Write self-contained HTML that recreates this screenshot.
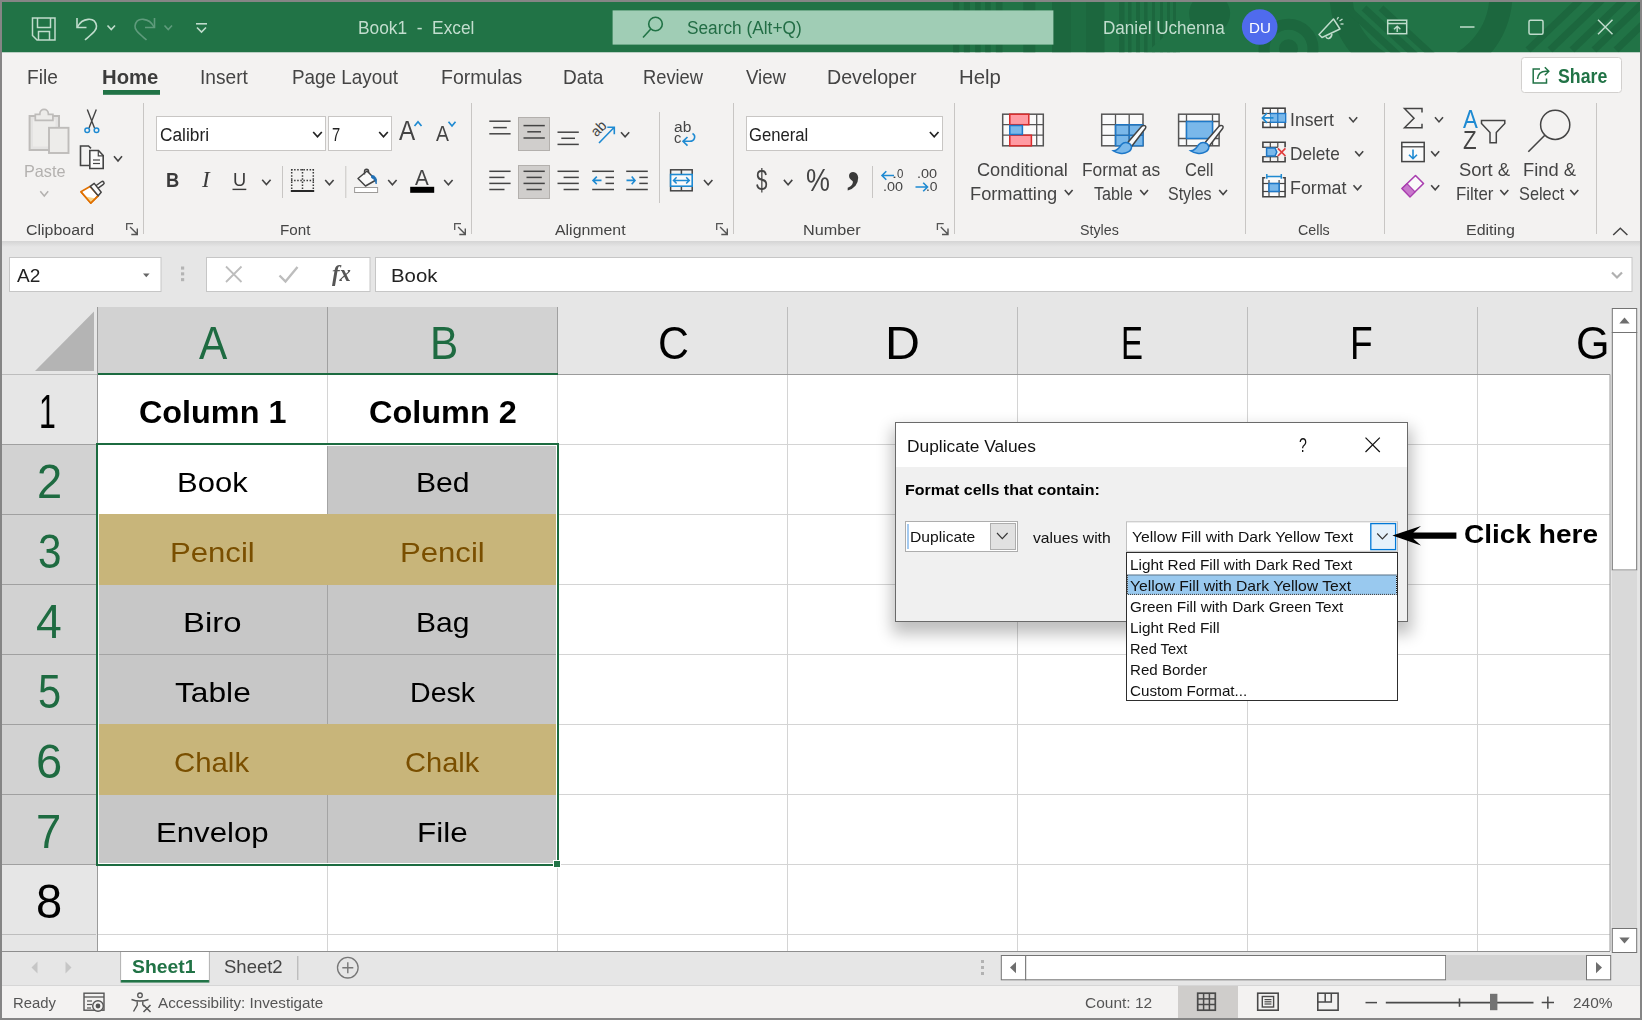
<!DOCTYPE html>
<html lang="en"><head><meta charset="utf-8"><title>Book1 - Excel</title>
<style>
html,body{margin:0;padding:0;}
body{width:1642px;height:1020px;overflow:hidden;position:relative;background:#e6e6e6;font-family:"Liberation Sans", sans-serif;}
#g{position:absolute;left:0;top:0;}
.t{position:absolute;white-space:pre;transform-origin:0 0;line-height:1;}
</style></head><body>
<svg id="g" width="1642" height="1020" viewBox="0 0 1642 1020">
<rect x="0" y="0" width="1642" height="1020" fill="#e6e6e6" />
<rect x="0" y="0" width="1642" height="52.5" fill="#217346" />
<clipPath id="tb"><rect x="0" y="2" width="1642" height="50.5"/></clipPath>
<g clip-path="url(#tb)" fill="#1c673e" stroke="none"><rect x="1052" y="0" width="19" height="53"/><rect x="1071" y="0" width="15" height="53" opacity="0.5"/><rect x="1086" y="0" width="18.5" height="53"/><rect x="1119" y="0" width="5.5" height="53"/><rect x="1128" y="0" width="3.5" height="53"/><rect x="1136" y="0" width="4" height="53"/><rect x="1144" y="0" width="3.5" height="53"/><rect x="1152" y="0" width="3" height="53"/><rect x="1160" y="0" width="3" height="53"/><rect x="1167" y="0" width="3" height="53"/><rect x="1173" y="0" width="3" height="53"/><rect x="953.2" y="0" width="6" height="53"/><rect x="963.9" y="0" width="6" height="53"/><rect x="975.2" y="0" width="5.4" height="53"/><rect x="985.2" y="0" width="5.5" height="53"/><rect x="995.9" y="0" width="6.6" height="53"/><rect x="1023.3" y="0" width="12" height="53"/><polygon points="1146,53 1180,53 1180,22" fill="#217346"/><circle cx="1209.6" cy="13.6" r="20.5"/></g>
<g clip-path="url(#tb)" fill="none" stroke="#1c673e"><circle cx="1288.5" cy="48.7" r="24.5" stroke-width="11"/><circle cx="1288.5" cy="48.7" r="9.5" fill="#1c673e" stroke="none"/><circle cx="1421" cy="-6" r="80" stroke-width="23"/><line x1="1347" y1="8" x2="1399" y2="56" stroke-width="7"/><line x1="1364" y1="8" x2="1416" y2="56" stroke-width="7"/><line x1="1381" y1="8" x2="1433" y2="56" stroke-width="7"/><line x1="1580" y1="0" x2="1528" y2="50" stroke-width="7"/><line x1="1602" y1="0" x2="1550" y2="50" stroke-width="7"/><line x1="1624" y1="0" x2="1572" y2="50" stroke-width="7"/><line x1="1646" y1="0" x2="1594" y2="50" stroke-width="7"/><line x1="1668" y1="0" x2="1616" y2="50" stroke-width="7"/></g>
<rect x="0" y="52.5" width="1642" height="188.5" fill="#f3f2f1" />
<defs><linearGradient id="rs" x1="0" y1="0" x2="0" y2="1"><stop offset="0" stop-color="#d4d4d4"/><stop offset="1" stop-color="#e6e6e6"/></linearGradient></defs>
<rect x="0" y="241" width="1642" height="6" fill="url(#rs)" />
<path d="M32.5 18 H55 V40 H37 L32.5 35.5 Z" stroke="#c0dccc" stroke-width="1.5" fill="none" />
<path d="M37.5 18 V27.5 H50.5 V18" stroke="#c0dccc" stroke-width="1.5" fill="none" />
<path d="M38.5 40 V31.5 H49.5 V40" stroke="#c0dccc" stroke-width="1.5" fill="none" />
<path d="M77 18 V27.5 H86.5" stroke="#c0dccc" stroke-width="1.6" fill="none" />
<path d="M77.5 27 C82 18 95 16 96.5 26 C97 30 93 33 85 40" stroke="#c0dccc" stroke-width="1.6" fill="none" />
<path d="M107.5 25.5 L111.25 29.5 L115 25.5" stroke="#c0dccc" stroke-width="1.6" fill="none" stroke-linejoin="miter"/>
<path d="M154.5 18 V27.5 H145" stroke="#5f9b7c" stroke-width="1.6" fill="none" />
<path d="M154 27 C149.5 18 136.5 16 135 26 C134.5 30 138.5 33 146.5 40" stroke="#5f9b7c" stroke-width="1.6" fill="none" />
<path d="M164.5 25.5 L168.25 29.5 L172 25.5" stroke="#5f9b7c" stroke-width="1.6" fill="none" stroke-linejoin="miter"/>
<line x1="196" y1="23.8" x2="207" y2="23.8" stroke="#c0dccc" stroke-width="1.6" />
<path d="M197 27.5 L201.5 32 L206 27.5" stroke="#c0dccc" stroke-width="1.6" fill="none" stroke-linejoin="miter"/>
<rect x="612.6" y="10.4" width="440.8" height="34.2" fill="#a0cdb5" />
<circle cx="655.5" cy="24" r="6.8" fill="none" stroke="#217346" stroke-width="1.6"/>
<line x1="650.8" y1="29" x2="643" y2="37.5" stroke="#217346" stroke-width="1.6" />
<circle cx="1259.7" cy="27" r="17.8" fill="#4f6bed"/>
<path d="M1319 34.5 L1333.5 19 L1340 29 L1322 37.5 Z" stroke="#c0dccc" stroke-width="1.5" fill="none" stroke-linejoin="round"/>
<path d="M1326 36.5 C1326.5 39.5 1331 39.5 1332 34" stroke="#c0dccc" stroke-width="1.5" fill="none" />
<line x1="1337" y1="19.5" x2="1338.5" y2="17" stroke="#c0dccc" stroke-width="1.4" />
<line x1="1339.5" y1="21" x2="1342.5" y2="19" stroke="#c0dccc" stroke-width="1.4" />
<line x1="1340.5" y1="24" x2="1343.5" y2="24" stroke="#c0dccc" stroke-width="1.4" />
<rect x="1387.7" y="20.2" width="19" height="13.5" fill="none" stroke="#c0dccc" stroke-width="1.5" />
<line x1="1387.7" y1="23.5" x2="1406.7" y2="23.5" stroke="#c0dccc" stroke-width="1.5" />
<path d="M1397.2 32 V26.5 M1394 29.3 L1397.2 26.2 L1400.4 29.3" stroke="#c0dccc" stroke-width="1.4" fill="none" />
<line x1="1460" y1="27" x2="1474.5" y2="27" stroke="#c0dccc" stroke-width="1.5" />
<rect x="1529" y="20.2" width="14" height="14" fill="none" stroke="#c0dccc" stroke-width="1.5" rx="1.5" />
<path d="M1598 19.8 L1612.5 34.3 M1612.5 19.8 L1598 34.3" stroke="#c0dccc" stroke-width="1.5" fill="none" />
<rect x="103" y="90" width="57" height="4.8" fill="#217346" />
<rect x="1521.5" y="57.5" width="100" height="35" fill="#ffffff" stroke="#d2d0ce" stroke-width="1" rx="3" />
<path d="M1540 69 H1533.2 V83 H1546.5 V78.5" stroke="#217346" stroke-width="1.5" fill="none" />
<path d="M1537.5 79 C1538 73.5 1541.5 71.3 1546 71.3 H1548.5 M1544.8 67.3 L1548.8 71.3 L1544.8 75.3" stroke="#217346" stroke-width="1.5" fill="none" />
<line x1="143.5" y1="103" x2="143.5" y2="234" stroke="#c8c6c4" stroke-width="1" />
<line x1="471.5" y1="103" x2="471.5" y2="234" stroke="#c8c6c4" stroke-width="1" />
<line x1="733.5" y1="103" x2="733.5" y2="234" stroke="#c8c6c4" stroke-width="1" />
<line x1="954.5" y1="103" x2="954.5" y2="234" stroke="#c8c6c4" stroke-width="1" />
<line x1="1245.5" y1="103" x2="1245.5" y2="234" stroke="#c8c6c4" stroke-width="1" />
<line x1="1384.5" y1="103" x2="1384.5" y2="234" stroke="#c8c6c4" stroke-width="1" />
<line x1="1596.5" y1="103" x2="1596.5" y2="234" stroke="#c8c6c4" stroke-width="1" />
<rect x="29.6" y="116" width="29.4" height="34" fill="#e4e3e2" stroke="#bebcba" stroke-width="2" />
<rect x="33" y="119.5" width="22.5" height="27" fill="#edecea" />
<path d="M35.3 120.3 V114.3 H39.8 C39.8 107.8 48.4 107.8 48.4 114.3 H52.9 V120.3 Z" stroke="#bebcba" stroke-width="1.7" fill="#edecea" />
<rect x="49" y="127.8" width="19.5" height="25.2" fill="#edecea" stroke="#bebcba" stroke-width="1.9" />
<path d="M40.3 191.2 L44.25 196 L48.2 191.2" stroke="#b3b1af" stroke-width="1.5" fill="none" stroke-linejoin="miter"/>
<path d="M87.3 109.5 L94.5 128 M96.3 109.5 L89 128" stroke="#444444" stroke-width="1.4" fill="none" />
<circle cx="87.2" cy="130.2" r="2.3" fill="none" stroke="#1e8ad2" stroke-width="1.5"/><circle cx="96.5" cy="130.2" r="2.3" fill="none" stroke="#1e8ad2" stroke-width="1.5"/>
<path d="M89 165.5 H80.5 V146 H88.5 L91 148.3" stroke="#444444" stroke-width="1.6" fill="none" />
<path d="M89.8 150.5 H98.5 L103.2 155.5 V168.5 H89.8 Z" stroke="#444444" stroke-width="1.6" fill="#fafafa" />
<path d="M98.3 150.8 V155.8 H103" stroke="#444444" stroke-width="1.2" fill="none" />
<line x1="93" y1="160" x2="100" y2="160" stroke="#444444" stroke-width="1.2" />
<line x1="93" y1="163.5" x2="100" y2="163.5" stroke="#444444" stroke-width="1.2" />
<path d="M114 156.2 L118.0 161 L122 156.2" stroke="#444444" stroke-width="1.6" fill="none" stroke-linejoin="miter"/>
<path d="M80.9 191.7 L90 186.5 L98.3 195.6 L90.7 203.1 Z" stroke="#e07000" stroke-width="1.6" fill="#ffffff" stroke-linejoin="round"/>
<path d="M85.3 196.6 L96.2 198.4 L90.7 202.8 Z" stroke="none" stroke-width="0" fill="#f8d58a" />
<path d="M80.9 191.7 L90.7 203.1 L98.3 195.6" stroke="#e07000" stroke-width="1.6" fill="none" stroke-linejoin="round"/>
<line x1="97.5" y1="186.6" x2="102.4" y2="183.1" stroke="#444444" stroke-width="4.8" stroke-linecap="round"/>
<line x1="97.5" y1="186.6" x2="102.4" y2="183.1" stroke="#fafafa" stroke-width="1.8" stroke-linecap="round"/>
<path d="M90.2 186.3 L94.2 183.4 L101.2 192.2 L98.2 195.7 Z" stroke="#444444" stroke-width="1.5" fill="#fafafa" stroke-linejoin="round"/>
<path d="M126.7 230.0 V223.7 H133.0" stroke="#555" stroke-width="1.3" fill="none" />
<path d="M130.1 227.1 L137.1 234.1 M137.3 228.5 V234.5 H131.3" stroke="#555" stroke-width="1.4" fill="none" />
<rect x="156.5" y="116.5" width="169" height="34" fill="#ffffff" stroke="#c8c6c4" stroke-width="1" />
<rect x="328.5" y="116.5" width="63" height="34" fill="#ffffff" stroke="#c8c6c4" stroke-width="1" />
<path d="M313.2 132 L317.5 136.8 L321.8 132" stroke="#222" stroke-width="1.7" fill="none" stroke-linejoin="miter"/>
<path d="M379.2 132 L383.5 136.8 L387.8 132" stroke="#222" stroke-width="1.7" fill="none" stroke-linejoin="miter"/>
<path d="M414.5 126 L418.0 121.8 L421.5 126" stroke="#1e8ad2" stroke-width="1.7" fill="none" stroke-linejoin="miter"/>
<path d="M448.5 121.8 L452.0 126 L455.5 121.8" stroke="#1e8ad2" stroke-width="1.7" fill="none" stroke-linejoin="miter"/>
<line x1="232.5" y1="189.4" x2="246.3" y2="189.4" stroke="#3a3a3a" stroke-width="1.4" />
<path d="M262.2 179.8 L266.4 184.6 L270.6 179.8" stroke="#444444" stroke-width="1.6" fill="none" stroke-linejoin="miter"/>
<line x1="282.5" y1="166" x2="282.5" y2="198" stroke="#c8c6c4" stroke-width="1" />
<line x1="291" y1="169.8" x2="314" y2="169.8" stroke="#3a3a3a" stroke-width="1.5" stroke-dasharray="1.5 1.6"/>
<line x1="291" y1="180.5" x2="314" y2="180.5" stroke="#3a3a3a" stroke-width="1.5" stroke-dasharray="1.5 1.6"/>
<line x1="291.7" y1="169" x2="291.7" y2="190" stroke="#3a3a3a" stroke-width="1.5" stroke-dasharray="1.5 1.6"/>
<line x1="302.5" y1="169" x2="302.5" y2="190" stroke="#3a3a3a" stroke-width="1.5" stroke-dasharray="1.5 1.6"/>
<line x1="313.3" y1="169" x2="313.3" y2="190" stroke="#3a3a3a" stroke-width="1.5" stroke-dasharray="1.5 1.6"/>
<line x1="290.8" y1="191" x2="314.2" y2="191" stroke="#111" stroke-width="1.8" />
<path d="M325.2 180 L329.4 184.8 L333.6 180" stroke="#444444" stroke-width="1.6" fill="none" stroke-linejoin="miter"/>
<line x1="345.8" y1="166" x2="345.8" y2="198" stroke="#c8c6c4" stroke-width="1" />
<path d="M367 171 L376 180 L365.5 186 L358 178.5 Z" stroke="#444444" stroke-width="1.5" fill="#fafafa" stroke-linejoin="round"/>
<path d="M364.5 174.5 V171.5 C364.5 168.5 368.6 168.5 368.6 171.5 V173" stroke="#444444" stroke-width="1.4" fill="none" />
<path d="M371.5 175.5 C375.5 175 377.2 179 376.2 184 C375.5 181 374 178.5 371.5 177.8 Z" stroke="#1e6fb5" stroke-width="0.8" fill="#1e6fb5" />
<rect x="354.6" y="187.5" width="23" height="5" fill="#ffffff" stroke="#9d9b99" stroke-width="1" />
<path d="M388.2 180 L392.4 184.8 L396.6 180" stroke="#444444" stroke-width="1.6" fill="none" stroke-linejoin="miter"/>
<rect x="410.2" y="186.8" width="24" height="6" fill="#000000" />
<path d="M444.2 180 L448.4 184.8 L452.6 180" stroke="#444444" stroke-width="1.6" fill="none" stroke-linejoin="miter"/>
<path d="M454.7 230.0 V223.7 H461.0" stroke="#555" stroke-width="1.3" fill="none" />
<path d="M458.1 227.1 L465.1 234.1 M465.3 228.5 V234.5 H459.3" stroke="#555" stroke-width="1.4" fill="none" />
<rect x="518.5" y="117.5" width="31" height="33" fill="#d0cecc" stroke="#b3b0ad" stroke-width="1" />
<rect x="518.5" y="165.5" width="31" height="33" fill="#d0cecc" stroke="#b3b0ad" stroke-width="1" />
<line x1="489.3" y1="121.2" x2="510.6" y2="121.2" stroke="#444444" stroke-width="1.5" />
<line x1="493.2" y1="127.6" x2="506.8" y2="127.6" stroke="#444444" stroke-width="1.5" />
<line x1="489.3" y1="133.8" x2="510.6" y2="133.8" stroke="#444444" stroke-width="1.5" />
<line x1="523.5" y1="125.6" x2="544.8" y2="125.6" stroke="#444444" stroke-width="1.5" />
<line x1="527.3" y1="131.8" x2="541" y2="131.8" stroke="#444444" stroke-width="1.5" />
<line x1="523.5" y1="138" x2="544.8" y2="138" stroke="#444444" stroke-width="1.5" />
<line x1="557.5" y1="132.2" x2="578.8" y2="132.2" stroke="#444444" stroke-width="1.5" />
<line x1="561.3" y1="138.3" x2="575" y2="138.3" stroke="#444444" stroke-width="1.5" />
<line x1="557.5" y1="144.4" x2="578.8" y2="144.4" stroke="#444444" stroke-width="1.5" />
<text x="0" y="0" transform="translate(596.5 137.5) rotate(-45)" font-family="Liberation Sans, sans-serif" font-size="14.5" fill="#444444" textLength="15.5" lengthAdjust="spacingAndGlyphs">ab</text>
<path d="M599 143 L614 127.5 M607.3 127.3 H614.3 V134.3" stroke="#1e8ad2" stroke-width="1.6" fill="none" />
<path d="M621 132.2 L625.1 136.8 L629.2 132.2" stroke="#444444" stroke-width="1.6" fill="none" stroke-linejoin="miter"/>
<line x1="659.5" y1="112" x2="659.5" y2="203" stroke="#c8c6c4" stroke-width="1" />
<path d="M692.5 133.5 C696.5 136 694.5 141.5 689.5 141.3 H683.5 M687.5 137 L683 141.3 L687.5 145.6" stroke="#1e8ad2" stroke-width="1.6" fill="none" />
<line x1="489.3" y1="171.3" x2="510.6" y2="171.3" stroke="#444444" stroke-width="1.5" />
<line x1="523.5" y1="171.3" x2="544.8" y2="171.3" stroke="#444444" stroke-width="1.5" />
<line x1="557.5" y1="171.3" x2="578.8" y2="171.3" stroke="#444444" stroke-width="1.5" />
<line x1="489.3" y1="177.4" x2="504.5" y2="177.4" stroke="#444444" stroke-width="1.5" />
<line x1="526.5" y1="177.4" x2="541.8" y2="177.4" stroke="#444444" stroke-width="1.5" />
<line x1="563.6" y1="177.4" x2="578.8" y2="177.4" stroke="#444444" stroke-width="1.5" />
<line x1="489.3" y1="183.4" x2="510.6" y2="183.4" stroke="#444444" stroke-width="1.5" />
<line x1="523.5" y1="183.4" x2="544.8" y2="183.4" stroke="#444444" stroke-width="1.5" />
<line x1="557.5" y1="183.4" x2="578.8" y2="183.4" stroke="#444444" stroke-width="1.5" />
<line x1="489.3" y1="189.5" x2="504.5" y2="189.5" stroke="#444444" stroke-width="1.5" />
<line x1="526.5" y1="189.5" x2="541.8" y2="189.5" stroke="#444444" stroke-width="1.5" />
<line x1="563.6" y1="189.5" x2="578.8" y2="189.5" stroke="#444444" stroke-width="1.5" />
<line x1="592.2" y1="171.3" x2="614" y2="171.3" stroke="#444444" stroke-width="1.5" />
<line x1="592.2" y1="189.5" x2="614" y2="189.5" stroke="#444444" stroke-width="1.5" />
<line x1="605.5" y1="177.4" x2="614" y2="177.4" stroke="#444444" stroke-width="1.5" />
<line x1="605.5" y1="183.4" x2="614" y2="183.4" stroke="#444444" stroke-width="1.5" />
<path d="M593 180.4 H601.5 M596.8 176.6 L593 180.4 L596.8 184.2" stroke="#1e8ad2" stroke-width="1.6" fill="none" />
<line x1="626.2" y1="171.3" x2="647.8" y2="171.3" stroke="#444444" stroke-width="1.5" />
<line x1="626.2" y1="189.5" x2="647.8" y2="189.5" stroke="#444444" stroke-width="1.5" />
<line x1="639.3" y1="177.4" x2="647.8" y2="177.4" stroke="#444444" stroke-width="1.5" />
<line x1="639.3" y1="183.4" x2="647.8" y2="183.4" stroke="#444444" stroke-width="1.5" />
<path d="M626.5 180.4 H635 M631.7 176.6 L635 180.4 L631.7 184.2" stroke="#1e8ad2" stroke-width="1.6" fill="none" />
<rect x="670.6" y="169.8" width="21.6" height="21" fill="none" stroke="#444444" stroke-width="1.5" />
<line x1="681.4" y1="169.8" x2="681.4" y2="174.5" stroke="#444444" stroke-width="1.5" />
<line x1="681.4" y1="186.2" x2="681.4" y2="190.8" stroke="#444444" stroke-width="1.5" />
<rect x="670.6" y="174.5" width="21.6" height="11.7" fill="#fafafa" stroke="#1e8ad2" stroke-width="1.6" />
<path d="M673.5 180.4 H689.3 M676.6 177.3 L673.5 180.4 L676.6 183.5 M686.2 177.3 L689.3 180.4 L686.2 183.5" stroke="#1e8ad2" stroke-width="1.5" fill="none" />
<path d="M704 180 L708.2 184.8 L712.4 180" stroke="#444444" stroke-width="1.6" fill="none" stroke-linejoin="miter"/>
<path d="M716.6999999999999 230.0 V223.7 H723.0" stroke="#555" stroke-width="1.3" fill="none" />
<path d="M720.0999999999999 227.1 L727.0999999999999 234.1 M727.3 228.5 V234.5 H721.3" stroke="#555" stroke-width="1.4" fill="none" />
<rect x="746.5" y="116.5" width="196" height="34" fill="#ffffff" stroke="#c8c6c4" stroke-width="1" />
<path d="M929.9 132 L934.2 136.8 L938.5 132" stroke="#222" stroke-width="1.7" fill="none" stroke-linejoin="miter"/>
<path d="M783.9 179.9 L788.0999999999999 184.7 L792.3 179.9" stroke="#444444" stroke-width="1.6" fill="none" stroke-linejoin="miter"/>
<line x1="872.5" y1="166" x2="872.5" y2="198" stroke="#c8c6c4" stroke-width="1" />
<path d="M882 175.5 H894 M886.3 171.2 L882 175.5 L886.3 179.8" stroke="#1e8ad2" stroke-width="1.6" fill="none" />
<path d="M915.5 187 H927.5 M923.2 182.7 L927.5 187 L923.2 191.3" stroke="#1e8ad2" stroke-width="1.6" fill="none" />
<path d="M937.4 230.0 V223.7 H943.7" stroke="#555" stroke-width="1.3" fill="none" />
<path d="M940.8 227.1 L947.8 234.1 M948 228.5 V234.5 H942" stroke="#555" stroke-width="1.4" fill="none" />
<rect x="1002.7" y="114.2" width="40.6" height="31.6" fill="#fafafa" stroke="#555" stroke-width="1.5" />
<line x1="1036.7" y1="114.2" x2="1036.7" y2="145.8" stroke="#555" stroke-width="1.3" />
<line x1="1009.8" y1="114.2" x2="1009.8" y2="145.8" stroke="#555" stroke-width="1.3" />
<line x1="1002.7" y1="124.7" x2="1043.3" y2="124.7" stroke="#555" stroke-width="1.3" />
<line x1="1002.7" y1="135.2" x2="1043.3" y2="135.2" stroke="#555" stroke-width="1.3" />
<rect x="1009.8" y="114.2" width="19" height="10.5" fill="#ff9aa2" stroke="#d92b2b" stroke-width="1.5" />
<rect x="1009.8" y="135.2" width="21.6" height="10.6" fill="#ff9aa2" stroke="#d92b2b" stroke-width="1.5" />
<rect x="1009.8" y="125.5" width="12.6" height="9" fill="#7ab8ea" stroke="#1e78c8" stroke-width="1.5" />
<rect x="1101.7" y="114.2" width="41.3" height="31.6" fill="#fafafa" stroke="#555" stroke-width="1.5" />
<rect x="1115.5" y="124.7" width="27.5" height="21.1" fill="#7ab8ea" stroke="#1e78c8" stroke-width="1.3" />
<line x1="1115.5" y1="114.2" x2="1115.5" y2="145.8" stroke="#555" stroke-width="1.3" />
<line x1="1129.2" y1="114.2" x2="1129.2" y2="145.8" stroke="#555" stroke-width="1.3" />
<line x1="1101.7" y1="124.7" x2="1143" y2="124.7" stroke="#555" stroke-width="1.3" />
<line x1="1101.7" y1="135.3" x2="1143" y2="135.3" stroke="#555" stroke-width="1.3" />
<line x1="1115.5" y1="124.7" x2="1143" y2="124.7" stroke="#1e78c8" stroke-width="1.3" />
<line x1="1115.5" y1="124.7" x2="1115.5" y2="145.8" stroke="#1e78c8" stroke-width="1.3" />
<line x1="1129.2" y1="124.7" x2="1129.2" y2="145.8" stroke="#1e78c8" stroke-width="1.3" />
<line x1="1115.5" y1="135.3" x2="1143" y2="135.3" stroke="#1e78c8" stroke-width="1.3" />
<path d="M1127.8 142.5 L1141.5 126.5 C1143.5 124.5 1146.8 125.5 1145.5 128.2 L1131.8 146.2 Z" stroke="#444" stroke-width="1.5" fill="#fafafa" stroke-linejoin="round"/>
<path d="M1113.5 150.8 C1118 150.5 1119.5 147 1121.5 144.5 C1124.5 141.2 1130.5 142.5 1131.5 146.5 C1132 151 1126 154.2 1120 153.2 C1117 152.7 1115 151.8 1113.5 150.8 Z" stroke="#1e78c8" stroke-width="1.5" fill="#7ab8ea" />
<rect x="1178.6" y="114.2" width="40.5" height="31.6" fill="#fafafa" stroke="#555" stroke-width="1.5" />
<line x1="1186.5" y1="114.2" x2="1186.5" y2="145.8" stroke="#555" stroke-width="1.3" />
<line x1="1212.5" y1="114.2" x2="1212.5" y2="145.8" stroke="#555" stroke-width="1.3" />
<line x1="1178.6" y1="121.5" x2="1219.1" y2="121.5" stroke="#555" stroke-width="1.3" />
<line x1="1178.6" y1="138.5" x2="1219.1" y2="138.5" stroke="#555" stroke-width="1.3" />
<rect x="1186.5" y="121.5" width="26" height="17" fill="#7ab8ea" stroke="#1e78c8" stroke-width="1.5" />
<path d="M1205.1 142.5 L1218.8 126.5 C1220.8 124.5 1224.1 125.5 1222.8 128.2 L1209.1 146.2 Z" stroke="#444" stroke-width="1.5" fill="#fafafa" stroke-linejoin="round"/>
<path d="M1190.8 150.8 C1195.3 150.5 1196.8 147 1198.8 144.5 C1201.8 141.2 1207.8 142.5 1208.8 146.5 C1209.3 151 1203.3 154.2 1197.3 153.2 C1194.3 152.7 1192.3 151.8 1190.8 150.8 Z" stroke="#1e78c8" stroke-width="1.5" fill="#7ab8ea" />
<path d="M1064.8 190 L1068.6999999999998 194.6 L1072.6 190" stroke="#444444" stroke-width="1.6" fill="none" stroke-linejoin="miter"/>
<path d="M1140.2 190 L1144.1 194.6 L1148 190" stroke="#444444" stroke-width="1.6" fill="none" stroke-linejoin="miter"/>
<path d="M1219.2 190 L1223.1 194.6 L1227 190" stroke="#444444" stroke-width="1.6" fill="none" stroke-linejoin="miter"/>
<rect x="1262.9" y="108.2" width="22.2" height="19.2" fill="#fafafa" stroke="#444" stroke-width="1.6" />
<line x1="1262.9" y1="113.5" x2="1285.1" y2="113.5" stroke="#444" stroke-width="1.2" />
<line x1="1262.9" y1="122.3" x2="1285.1" y2="122.3" stroke="#444" stroke-width="1.2" />
<line x1="1270.3" y1="108.2" x2="1270.3" y2="127.4" stroke="#444" stroke-width="1.2" />
<line x1="1277.8" y1="108.2" x2="1277.8" y2="127.4" stroke="#444" stroke-width="1.2" />
<rect x="1270.3" y="113.5" width="15.4" height="8.8" fill="#7ab8ea" stroke="#1e78c8" stroke-width="1.3" />
<line x1="1277.8" y1="113.5" x2="1277.8" y2="122.3" stroke="#1e78c8" stroke-width="1.2" />
<rect x="1261" y="114.4" width="9.2" height="7" fill="#f3f2f1" />
<path d="M1262.6 117.9 H1273.5 M1267 113 L1262.4 117.9 L1267 122.8" stroke="#1e8ad2" stroke-width="1.7" fill="none" />
<path d="M1349.2 117.3 L1353.2 121.9 L1357.2 117.3" stroke="#444444" stroke-width="1.6" fill="none" stroke-linejoin="miter"/>
<path d="M1262.9 147.3 V142.2 H1285.1 V147.3 M1262.9 156.7 V161.8 H1285.1 V156.7" stroke="#444" stroke-width="1.6" fill="none" />
<line x1="1270.3" y1="142.2" x2="1270.3" y2="147.3" stroke="#444" stroke-width="1.2" />
<line x1="1277.8" y1="142.2" x2="1277.8" y2="147.3" stroke="#444" stroke-width="1.2" />
<line x1="1270.3" y1="156.7" x2="1270.3" y2="161.8" stroke="#444" stroke-width="1.2" />
<line x1="1277.8" y1="156.7" x2="1277.8" y2="161.8" stroke="#444" stroke-width="1.2" />
<line x1="1262.2" y1="147.3" x2="1277.8" y2="147.3" stroke="#444" stroke-width="1.3" />
<line x1="1262.2" y1="156.7" x2="1277.8" y2="156.7" stroke="#444" stroke-width="1.3" />
<path d="M1266.6 148 H1275 L1276.8 152 L1275 156 H1266.6 Z" stroke="#1e78c8" stroke-width="1.5" fill="#7ab8ea" />
<path d="M1277.9 148.3 L1285.4 156 M1285.4 148.3 L1277.9 156" stroke="#e03c3c" stroke-width="1.7" fill="none" />
<path d="M1355.2 151.2 L1359.2 155.8 L1363.2 151.2" stroke="#444444" stroke-width="1.6" fill="none" stroke-linejoin="miter"/>
<path d="M1265.3 177.8 H1262.9 V196.8 H1285.1 V177.8 H1282.7" stroke="#444" stroke-width="1.6" fill="#fafafa" />
<line x1="1262.9" y1="183.5" x2="1285.1" y2="183.5" stroke="#444" stroke-width="1.2" />
<line x1="1262.9" y1="191.5" x2="1285.1" y2="191.5" stroke="#444" stroke-width="1.2" />
<line x1="1269" y1="180" x2="1269" y2="196.8" stroke="#444" stroke-width="1.2" />
<line x1="1279.1" y1="180" x2="1279.1" y2="196.8" stroke="#444" stroke-width="1.2" />
<rect x="1269" y="183.5" width="10.1" height="8" fill="#7ab8ea" stroke="#1e78c8" stroke-width="1.5" />
<path d="M1266.8 174 V178.8 M1281.3 174 V178.8 M1266.8 176.4 H1281.3" stroke="#1e8ad2" stroke-width="1.5" fill="none" />
<path d="M1353.5 185.2 L1357.5 189.8 L1361.5 185.2" stroke="#444444" stroke-width="1.6" fill="none" stroke-linejoin="miter"/>
<path d="M1422 112.5 V108.5 H1404.5 L1414 118.2 L1404.5 127.8 H1422 V123.8" stroke="#444444" stroke-width="1.5" fill="none" stroke-linejoin="miter"/>
<path d="M1435 117.3 L1439.0 121.9 L1443 117.3" stroke="#444444" stroke-width="1.6" fill="none" stroke-linejoin="miter"/>
<rect x="1401.8" y="142.4" width="22.4" height="19.2" fill="#fafafa" stroke="#444444" stroke-width="1.5" />
<line x1="1401.8" y1="146.8" x2="1424.2" y2="146.8" stroke="#444444" stroke-width="1.3" />
<path d="M1413 149.5 V158.5 M1409 154.7 L1413 158.7 L1417 154.7" stroke="#1e8ad2" stroke-width="1.6" fill="none" />
<path d="M1431.2 151.2 L1435.2 155.8 L1439.2 151.2" stroke="#444444" stroke-width="1.6" fill="none" stroke-linejoin="miter"/>
<path d="M1402 188.5 L1415.5 175.5 L1423.5 183.5 L1410 196.8 Z" stroke="#a93eaf" stroke-width="1.6" fill="#fafafa" stroke-linejoin="round"/>
<path d="M1402 188.5 L1407 183.7 L1415 191.8 L1410 196.8 Z" stroke="#a93eaf" stroke-width="1.2" fill="#c878cc" stroke-linejoin="round"/>
<path d="M1431.2 185.2 L1435.2 189.8 L1439.2 185.2" stroke="#444444" stroke-width="1.6" fill="none" stroke-linejoin="miter"/>
<path d="M1481.5 120.6 H1504.8 V123.5 L1496.3 132.5 V142.8 H1490 V132.5 L1481.5 123.5 Z" stroke="#444444" stroke-width="1.5" fill="none" stroke-linejoin="miter"/>
<path d="M1500.3 190 L1504.3 194.6 L1508.3 190" stroke="#444444" stroke-width="1.6" fill="none" stroke-linejoin="miter"/>
<circle cx="1555.2" cy="124.8" r="14.6" fill="none" stroke="#444444" stroke-width="1.5"/>
<line x1="1544.8" y1="135.2" x2="1528.3" y2="151.8" stroke="#444444" stroke-width="1.6" />
<path d="M1570.3 190 L1574.3 194.6 L1578.3 190" stroke="#444444" stroke-width="1.6" fill="none" stroke-linejoin="miter"/>
<path d="M1613.2 235 L1620.3 228.3 L1627.4 235" stroke="#444444" stroke-width="1.5" fill="none" />
<rect x="9.5" y="257.5" width="151.5" height="34" fill="#ffffff" stroke="#c6c6c6" stroke-width="1" />
<path d="M143 273.5 H149.6 L146.3 277.3 Z" stroke="none" stroke-width="0" fill="#666" />
<rect x="181" y="266.5" width="3.2" height="3.1" fill="#b4b4b4" />
<rect x="181" y="272.3" width="3.2" height="3.1" fill="#b4b4b4" />
<rect x="181" y="278.1" width="3.2" height="3.1" fill="#b4b4b4" />
<rect x="206.5" y="257.5" width="163.5" height="34" fill="#ffffff" stroke="#c6c6c6" stroke-width="1" />
<path d="M226 266.5 L241.5 282 M241.5 266.5 L226 282" stroke="#bdbdbd" stroke-width="1.8" fill="none" />
<path d="M279.5 275.5 L285.5 281.5 L297.5 267" stroke="#bdbdbd" stroke-width="2.4" fill="none" />
<rect x="375.5" y="257.5" width="1256.5" height="34" fill="#ffffff" stroke="#c6c6c6" stroke-width="1" />
<path d="M1612 272.5 L1617 277.5 L1622 272.5" stroke="#b0b0b0" stroke-width="2.2" fill="none" />
<rect x="98" y="375" width="1512" height="576.5" fill="#ffffff" />
<rect x="98" y="307" width="460" height="67" fill="#d2d2d2" />
<rect x="2" y="445" width="95" height="420" fill="#d2d2d2" />
<path d="M35 371 L94 311.5 V371 Z" stroke="none" stroke-width="0" fill="#b4b4b4" />
<line x1="327.5" y1="375" x2="327.5" y2="951" stroke="#d4d4d4" stroke-width="1" />
<line x1="557.5" y1="375" x2="557.5" y2="951" stroke="#d4d4d4" stroke-width="1" />
<line x1="787.5" y1="375" x2="787.5" y2="951" stroke="#d4d4d4" stroke-width="1" />
<line x1="1017.5" y1="375" x2="1017.5" y2="951" stroke="#d4d4d4" stroke-width="1" />
<line x1="1247.5" y1="375" x2="1247.5" y2="951" stroke="#d4d4d4" stroke-width="1" />
<line x1="1477.5" y1="375" x2="1477.5" y2="951" stroke="#d4d4d4" stroke-width="1" />
<line x1="98" y1="444.5" x2="1610" y2="444.5" stroke="#d4d4d4" stroke-width="1" />
<line x1="98" y1="514.5" x2="1610" y2="514.5" stroke="#d4d4d4" stroke-width="1" />
<line x1="98" y1="584.5" x2="1610" y2="584.5" stroke="#d4d4d4" stroke-width="1" />
<line x1="98" y1="654.5" x2="1610" y2="654.5" stroke="#d4d4d4" stroke-width="1" />
<line x1="98" y1="724.5" x2="1610" y2="724.5" stroke="#d4d4d4" stroke-width="1" />
<line x1="98" y1="794.5" x2="1610" y2="794.5" stroke="#d4d4d4" stroke-width="1" />
<line x1="98" y1="864.5" x2="1610" y2="864.5" stroke="#d4d4d4" stroke-width="1" />
<line x1="98" y1="934.5" x2="1610" y2="934.5" stroke="#d4d4d4" stroke-width="1" />
<rect x="98" y="445" width="459" height="419" fill="#ffffff" />
<rect x="328" y="446" width="228" height="69" fill="#c7c7c7" />
<rect x="99" y="514" width="457" height="71" fill="#c8b57a" />
<rect x="99" y="585" width="457" height="139" fill="#c7c7c7" />
<rect x="99" y="724" width="457" height="71" fill="#c8b57a" />
<rect x="99" y="795" width="457" height="68" fill="#c7c7c7" />
<line x1="327.5" y1="446" x2="327.5" y2="514" stroke="#a4a4a4" stroke-width="1" />
<line x1="327.5" y1="585" x2="327.5" y2="724" stroke="#a4a4a4" stroke-width="1" />
<line x1="327.5" y1="795" x2="327.5" y2="863" stroke="#a4a4a4" stroke-width="1" />
<line x1="99" y1="654.5" x2="556" y2="654.5" stroke="#a4a4a4" stroke-width="1" />
<line x1="327.5" y1="307" x2="327.5" y2="374" stroke="#a0a0a0" stroke-width="1" />
<line x1="557.5" y1="307" x2="557.5" y2="374" stroke="#a0a0a0" stroke-width="1" />
<line x1="787.5" y1="307" x2="787.5" y2="374" stroke="#bdbdbd" stroke-width="1" />
<line x1="1017.5" y1="307" x2="1017.5" y2="374" stroke="#bdbdbd" stroke-width="1" />
<line x1="1247.5" y1="307" x2="1247.5" y2="374" stroke="#bdbdbd" stroke-width="1" />
<line x1="1477.5" y1="307" x2="1477.5" y2="374" stroke="#bdbdbd" stroke-width="1" />
<line x1="2" y1="444.5" x2="96" y2="444.5" stroke="#a0a0a0" stroke-width="1" />
<line x1="2" y1="514.5" x2="96" y2="514.5" stroke="#a0a0a0" stroke-width="1" />
<line x1="2" y1="584.5" x2="96" y2="584.5" stroke="#a0a0a0" stroke-width="1" />
<line x1="2" y1="654.5" x2="96" y2="654.5" stroke="#a0a0a0" stroke-width="1" />
<line x1="2" y1="724.5" x2="96" y2="724.5" stroke="#a0a0a0" stroke-width="1" />
<line x1="2" y1="794.5" x2="96" y2="794.5" stroke="#a0a0a0" stroke-width="1" />
<line x1="2" y1="864.5" x2="96" y2="864.5" stroke="#a0a0a0" stroke-width="1" />
<line x1="2" y1="934.5" x2="96" y2="934.5" stroke="#bdbdbd" stroke-width="1" />
<line x1="97.5" y1="307" x2="97.5" y2="951" stroke="#9b9b9b" stroke-width="1" />
<line x1="2" y1="374.5" x2="97" y2="374.5" stroke="#bdbdbd" stroke-width="1" />
<line x1="558" y1="374.5" x2="1610" y2="374.5" stroke="#9b9b9b" stroke-width="1" />
<line x1="1610" y1="374.5" x2="1610" y2="951" stroke="#9b9b9b" stroke-width="1" />
<line x1="2" y1="951.5" x2="1610" y2="951.5" stroke="#8e8e8e" stroke-width="1" />
<rect x="98" y="373" width="460" height="2" fill="#1c6b40" />
<rect x="97" y="444" width="461" height="421" fill="none" stroke="#1c6b40" stroke-width="2" />
<rect x="553" y="860" width="8" height="8" fill="#ffffff" />
<rect x="554" y="861" width="6" height="6" fill="#217346" />
<rect x="1612.3" y="308.5" width="24.4" height="24" fill="#ffffff" stroke="#747474" stroke-width="1" />
<path d="M1619.3 323.5 L1624.5 317.5 L1629.7 323.5 Z" stroke="none" stroke-width="0" fill="#6e6e6e" />
<rect x="1612.3" y="332.5" width="24.4" height="237.5" fill="#ffffff" stroke="#747474" stroke-width="1" />
<rect x="1612" y="570.5" width="25" height="358" fill="#d9d9d9" />
<rect x="1612.3" y="928.5" width="24.4" height="24" fill="#ffffff" stroke="#747474" stroke-width="1" />
<path d="M1619.3 937.5 L1624.5 943.5 L1629.7 937.5 Z" stroke="none" stroke-width="0" fill="#6e6e6e" />
<rect x="981" y="960" width="3" height="3" fill="#b2b2b2" />
<rect x="981" y="966" width="3" height="3" fill="#b2b2b2" />
<rect x="981" y="972" width="3" height="3" fill="#b2b2b2" />
<rect x="1001.3" y="955.5" width="24.4" height="24.3" fill="#ffffff" stroke="#747474" stroke-width="1" />
<path d="M1016 962 L1010 967.6 L1016 973.2 Z" stroke="none" stroke-width="0" fill="#6e6e6e" />
<rect x="1025.7" y="955.5" width="420" height="24.3" fill="#ffffff" stroke="#747474" stroke-width="1" />
<rect x="1446.2" y="955" width="140" height="25.3" fill="#d3d3d3" />
<rect x="1586.5" y="955.5" width="24.2" height="24.3" fill="#ffffff" stroke="#747474" stroke-width="1" />
<path d="M1596 962 L1602 967.6 L1596 973.2 Z" stroke="none" stroke-width="0" fill="#6e6e6e" />
<path d="M37.5 961.5 L31.5 967.5 L37.5 973.5 Z" stroke="none" stroke-width="0" fill="#c6c6c6" />
<path d="M65.5 961.5 L71.5 967.5 L65.5 973.5 Z" stroke="none" stroke-width="0" fill="#c6c6c6" />
<rect x="120.6" y="952" width="88.8" height="30.5" fill="#ffffff" />
<rect x="120.6" y="980" width="88.8" height="2.6" fill="#217346" />
<line x1="120.6" y1="952" x2="120.6" y2="982" stroke="#b0b0b0" stroke-width="1" />
<line x1="209.4" y1="952" x2="209.4" y2="982" stroke="#b0b0b0" stroke-width="1" />
<line x1="297.8" y1="956" x2="297.8" y2="980" stroke="#ababab" stroke-width="1" />
<circle cx="347.8" cy="967.7" r="10.3" fill="none" stroke="#777" stroke-width="1.3"/>
<path d="M342.3 967.7 H353.3 M347.8 962.2 V973.2" stroke="#777" stroke-width="1.4" fill="none" />
<rect x="0" y="985.5" width="1642" height="34.5" fill="#f3f2f1" />
<line x1="0" y1="985.5" x2="1642" y2="985.5" stroke="#d6d6d6" stroke-width="1" />
<rect x="84" y="993.2" width="20" height="17" fill="none" stroke="#555" stroke-width="1.4" />
<line x1="84" y1="997" x2="104" y2="997" stroke="#555" stroke-width="1.3" />
<line x1="87" y1="1001" x2="92" y2="1001" stroke="#555" stroke-width="1.2" />
<line x1="87" y1="1004.5" x2="92" y2="1004.5" stroke="#555" stroke-width="1.2" />
<line x1="87" y1="1008" x2="91" y2="1008" stroke="#555" stroke-width="1.2" />
<circle cx="98" cy="1006" r="5.3" fill="#f3f2f1" stroke="#555" stroke-width="1.4"/><circle cx="98" cy="1006" r="2.4" fill="#555"/>
<circle cx="140" cy="995.3" r="2.3" fill="none" stroke="#555" stroke-width="1.3"/>
<path d="M131.5 999.5 C137 1001.5 143 1001.5 148.5 999.5 M137.2 1001 V1005 L133.5 1011.5 M142.8 1001 V1004.5 L144 1006.5" stroke="#555" stroke-width="1.4" fill="none" />
<path d="M143.5 1005 L150.5 1012 M150.5 1005 L143.5 1012" stroke="#555" stroke-width="1.5" fill="none" />
<rect x="1178" y="986" width="60" height="32" fill="#cfcdcb" />
<rect x="1197.7" y="993.2" width="17.6" height="17" fill="none" stroke="#4a4a4a" stroke-width="1.7" />
<line x1="1203.6" y1="993.2" x2="1203.6" y2="1010.2" stroke="#4a4a4a" stroke-width="1.5" />
<line x1="1209.4" y1="993.2" x2="1209.4" y2="1010.2" stroke="#4a4a4a" stroke-width="1.5" />
<line x1="1197.7" y1="998.9" x2="1215.3" y2="998.9" stroke="#4a4a4a" stroke-width="1.5" />
<line x1="1197.7" y1="1004.5" x2="1215.3" y2="1004.5" stroke="#4a4a4a" stroke-width="1.5" />
<rect x="1257.7" y="993.2" width="20.5" height="17" fill="none" stroke="#4a4a4a" stroke-width="1.6" />
<rect x="1262.3" y="996.5" width="11.3" height="10.5" fill="none" stroke="#4a4a4a" stroke-width="1.4" />
<line x1="1264.5" y1="999.6" x2="1271.5" y2="999.6" stroke="#4a4a4a" stroke-width="1.2" />
<line x1="1264.5" y1="1001.8" x2="1271.5" y2="1001.8" stroke="#4a4a4a" stroke-width="1.2" />
<line x1="1264.5" y1="1004" x2="1271.5" y2="1004" stroke="#4a4a4a" stroke-width="1.2" />
<rect x="1317.8" y="993.2" width="20.3" height="17" fill="none" stroke="#4a4a4a" stroke-width="1.6" />
<path d="M1325.2 993.2 V1002 M1317.8 1002 H1331.3 V993.2" stroke="#4a4a4a" stroke-width="1.5" fill="none" />
<line x1="1365.5" y1="1002.6" x2="1377" y2="1002.6" stroke="#4a4a4a" stroke-width="1.5" />
<line x1="1385.8" y1="1002.6" x2="1533.5" y2="1002.6" stroke="#4a4a4a" stroke-width="1.6" />
<line x1="1459.5" y1="998.4" x2="1459.5" y2="1006.8" stroke="#4a4a4a" stroke-width="1.6" />
<rect x="1490" y="993.8" width="7.4" height="16.4" fill="#737373" />
<path d="M1541.7 1002.6 H1554 M1547.85 996.4 V1008.8" stroke="#4a4a4a" stroke-width="1.5" fill="none" />
<defs><filter id="sh" x="-10%" y="-20%" width="120%" height="145%"><feGaussianBlur stdDeviation="8"/></filter></defs>
<rect x="892" y="428" width="520" height="206" fill="#000000" opacity="0.25" filter="url(#sh)"/>
<rect x="895.5" y="422.5" width="512" height="199" fill="#f0f0f0" stroke="#6a6a6a" stroke-width="1" />
<rect x="896" y="423" width="511" height="44" fill="#ffffff" />
<path d="M1365.5 437.6 L1379.8 452 M1379.8 437.6 L1365.5 452" stroke="#111" stroke-width="1.2" fill="none" />
<rect x="905.5" y="521.5" width="112" height="30" fill="#ffffff" stroke="#adadad" stroke-width="1" />
<line x1="908" y1="524" x2="908" y2="549" stroke="#7eb4ea" stroke-width="1.4" />
<rect x="990.5" y="523.5" width="25" height="26" fill="#e1e1e1" stroke="#adadad" stroke-width="1" />
<path d="M997 533 L1002.3 538.6 L1007.6 533" stroke="#333" stroke-width="1.1" fill="none" stroke-linejoin="miter"/>
<rect x="1126.5" y="521.8" width="271" height="29.5" fill="#ffffff" stroke="#c0c0c0" stroke-width="1" />
<rect x="1370.8" y="523.6" width="24.8" height="26" fill="#e5f1fb" stroke="#0078d7" stroke-width="1.3" />
<path d="M1377.2 533.5 L1382.4 539 L1387.6 533.5" stroke="#333" stroke-width="1.1" fill="none" stroke-linejoin="miter"/>
<rect x="1126.5" y="552.5" width="271" height="148" fill="#ffffff" stroke="#2e2e2e" stroke-width="1" />
<rect x="1127.5" y="574.6" width="269" height="20" fill="#99c9ef" />
<rect x="1127.5" y="575" width="269" height="19.4" fill="none" stroke="#222" stroke-width="1" stroke-dasharray="1 1"/>
<path d="M1392.4 535.6 L1421 526 L1413.3 532.4 H1456.4 V538.8 H1413.3 L1421 545.4 Z" stroke="none" stroke-width="0" fill="#000" />
<rect x="0" y="0" width="1642" height="2" fill="#858585" />
<rect x="0" y="1018" width="1642" height="2" fill="#858585" />
<rect x="0" y="0" width="2" height="1020" fill="#858585" />
<rect x="1640" y="0" width="2" height="1020" fill="#858585" />
</svg>
<span class="t" id="t0" style="left:358.06px;top:19.00px;font-size:18.44px;color:#c2ddce;transform:scaleX(0.9393);">Book1  -  Excel</span>
<span class="t" id="t1" style="left:687.00px;top:19.00px;font-size:18.58px;color:#226d45;transform:scaleX(0.9294);">Search (Alt+Q)</span>
<span class="t" id="t2" style="left:1103.07px;top:19.00px;font-size:18.44px;color:#c2ddce;transform:scaleX(0.9271);">Daniel Uchenna</span>
<span class="t" id="t3" style="left:1248.99px;top:20.00px;font-size:15.08px;color:#ffffff;transform:scaleX(1.0056);">DU</span>
<span class="t" id="t4" style="left:26.52px;top:68.00px;font-size:19.41px;color:#444;transform:scaleX(0.9838);">File</span>
<span class="t" id="t5" style="left:199.51px;top:68.00px;font-size:19.41px;color:#444;transform:scaleX(0.9866);">Insert</span>
<span class="t" id="t6" style="left:291.53px;top:68.00px;font-size:19.41px;color:#444;transform:scaleX(0.9716);">Page Layout</span>
<span class="t" id="t7" style="left:441.00px;top:68.00px;font-size:19.41px;color:#444;transform:scaleX(1.0041);">Formulas</span>
<span class="t" id="t8" style="left:562.52px;top:68.00px;font-size:19.41px;color:#444;transform:scaleX(0.9826);">Data</span>
<span class="t" id="t9" style="left:643.06px;top:68.00px;font-size:19.41px;color:#444;transform:scaleX(0.9432);">Review</span>
<span class="t" id="t10" style="left:746.00px;top:68.00px;font-size:19.41px;color:#444;transform:scaleX(0.9602);">View</span>
<span class="t" id="t11" style="left:827.49px;top:68.00px;font-size:19.41px;color:#444;transform:scaleX(1.0114);">Developer</span>
<span class="t" id="t12" style="left:958.95px;top:68.00px;font-size:19.41px;color:#444;transform:scaleX(1.0493);">Help</span>
<span class="t" id="t13" style="left:102.46px;top:68.00px;font-size:19.41px;color:#3c3c3c;font-weight:bold;transform:scaleX(1.0447);">Home</span>
<span class="t" id="t14" style="left:1558.00px;top:66.00px;font-size:20.25px;color:#217346;font-weight:bold;transform:scaleX(0.8747);">Share</span>
<span class="t" id="t15" style="left:24.06px;top:163.00px;font-size:17.32px;color:#b3b1af;transform:scaleX(0.9380);">Paste</span>
<span class="t" id="t16" style="left:26.30px;top:222.00px;font-size:15.5px;color:#444;transform:scaleX(1.0270);">Clipboard</span>
<span class="t" id="t17" style="left:159.50px;top:126.00px;font-size:18.44px;color:#222;transform:scaleX(0.9383);">Calibri</span>
<span class="t" id="t18" style="left:332.00px;top:126.00px;font-size:18.44px;color:#222;transform:scaleX(0.8000);">7</span>
<span class="t" id="t19" style="left:399.20px;top:117.00px;font-size:27.09px;color:#444444;transform:scaleX(0.8947);">A</span>
<span class="t" id="t20" style="left:436.00px;top:123.00px;font-size:21.23px;color:#444444;transform:scaleX(0.9133);">A</span>
<span class="t" id="t21" style="left:165.70px;top:170.00px;font-size:20.39px;color:#3a3a3a;font-weight:bold;transform:scaleX(0.9000);">B</span>
<span class="t" id="t22" style="left:202.05px;top:169.00px;font-size:22.12px;color:#3a3a3a;font-style:italic;font-family:'Liberation Serif', serif;transform:scaleX(1.0500);">I</span>
<span class="t" id="t23" style="left:232.53px;top:171.00px;font-size:18.72px;color:#3a3a3a;transform:scaleX(0.9750);">U</span>
<span class="t" id="t24" style="left:415.00px;top:168.00px;font-size:21.51px;color:#444444;transform:scaleX(0.9600);">A</span>
<span class="t" id="t25" style="left:280.01px;top:222.00px;font-size:15.36px;color:#444;transform:scaleX(0.9913);">Font</span>
<span class="t" id="t26" style="left:673.80px;top:120.00px;font-size:14.05px;color:#444444;transform:scaleX(1.1067);">ab</span>
<span class="t" id="t27" style="left:673.80px;top:131.00px;font-size:14.34px;color:#444444;transform:scaleX(1.0286);">c</span>
<span class="t" id="t28" style="left:554.70px;top:222.00px;font-size:15.5px;color:#444;transform:scaleX(1.0242);">Alignment</span>
<span class="t" id="t29" style="left:749.20px;top:126.00px;font-size:18.44px;color:#222;transform:scaleX(0.9039);">General</span>
<span class="t" id="t30" style="left:755.60px;top:166.00px;font-size:28.91px;color:#444444;transform:scaleX(0.7125);">$</span>
<span class="t" id="t31" style="left:805.95px;top:165.00px;font-size:31.56px;color:#444444;transform:scaleX(0.8538);">%</span>
<span class="t" id="t32" style="left:846.60px;top:130.00px;font-size:61.67px;color:#3a3a3a;font-weight:bold;font-family:'Liberation Serif', serif;transform:scaleX(0.8571);">,</span>
<span class="t" id="t33" style="left:897.00px;top:168.00px;font-size:12.01px;color:#444444;transform:scaleX(0.9571);">0</span>
<span class="t" id="t34" style="left:891.50px;top:168.00px;font-size:12.01px;color:#444444;transform:scaleX(1.5000);">.</span>
<span class="t" id="t35" style="left:883.30px;top:181.00px;font-size:12.01px;color:#444444;transform:scaleX(1.1994);">.00</span>
<span class="t" id="t36" style="left:917.29px;top:168.00px;font-size:12.01px;color:#444444;transform:scaleX(1.2057);">.00</span>
<span class="t" id="t37" style="left:925.84px;top:181.00px;font-size:12.01px;color:#444444;transform:scaleX(1.1571);">.0</span>
<span class="t" id="t38" style="left:802.55px;top:222.00px;font-size:15.5px;color:#444;transform:scaleX(1.0451);">Number</span>
<span class="t" id="t39" style="left:977.40px;top:162.00px;font-size:17.88px;color:#444444;transform:scaleX(1.0171);">Conditional</span>
<span class="t" id="t40" style="left:970.18px;top:186.00px;font-size:17.88px;color:#444444;transform:scaleX(1.0213);">Formatting</span>
<span class="t" id="t41" style="left:1081.63px;top:162.00px;font-size:17.88px;color:#444444;transform:scaleX(0.9716);">Format as</span>
<span class="t" id="t42" style="left:1094.20px;top:186.00px;font-size:17.88px;color:#444444;transform:scaleX(0.9050);">Table</span>
<span class="t" id="t43" style="left:1185.30px;top:162.00px;font-size:17.88px;color:#444444;transform:scaleX(0.9229);">Cell</span>
<span class="t" id="t44" style="left:1168.40px;top:186.00px;font-size:17.88px;color:#444444;transform:scaleX(0.8952);">Styles</span>
<span class="t" id="t45" style="left:1080.40px;top:222.00px;font-size:15.5px;color:#444;transform:scaleX(0.9185);">Styles</span>
<span class="t" id="t46" style="left:1290.02px;top:112.00px;font-size:17.88px;color:#444444;transform:scaleX(0.9839);">Insert</span>
<span class="t" id="t47" style="left:1290.04px;top:146.00px;font-size:17.88px;color:#444444;transform:scaleX(0.9627);">Delete</span>
<span class="t" id="t48" style="left:1290.00px;top:180.00px;font-size:17.88px;color:#444444;transform:scaleX(0.9982);">Format</span>
<span class="t" id="t49" style="left:1298.00px;top:222.00px;font-size:15.5px;color:#444;transform:scaleX(0.9222);">Cells</span>
<span class="t" id="t50" style="left:1463.00px;top:107.00px;font-size:25.56px;color:#1e8ad2;transform:scaleX(0.8706);">A</span>
<span class="t" id="t51" style="left:1463.20px;top:128.00px;font-size:25.42px;color:#444444;transform:scaleX(0.8800);">Z</span>
<span class="t" id="t52" style="left:1458.70px;top:162.00px;font-size:17.88px;color:#444444;transform:scaleX(1.0299);">Sort &amp;</span>
<span class="t" id="t53" style="left:1456.16px;top:186.00px;font-size:17.88px;color:#444444;transform:scaleX(0.9422);">Filter</span>
<span class="t" id="t54" style="left:1522.87px;top:162.00px;font-size:17.88px;color:#444444;transform:scaleX(1.0256);">Find &amp;</span>
<span class="t" id="t55" style="left:1518.60px;top:186.00px;font-size:17.88px;color:#444444;transform:scaleX(0.9139);">Select</span>
<span class="t" id="t56" style="left:1465.67px;top:222.00px;font-size:15.5px;color:#444;transform:scaleX(1.0312);">Editing</span>
<span class="t" id="t57" style="left:16.50px;top:268.00px;font-size:17.6px;color:#222;transform:scaleX(1.0851);">A2</span>
<span class="t" id="t58" style="left:332.10px;top:263.00px;font-size:22.5px;color:#555;font-weight:bold;font-style:italic;font-family:'Liberation Serif', serif;transform:scaleX(1.0112);">fx</span>
<span class="t" id="t59" style="left:390.84px;top:268.00px;font-size:17.6px;color:#222;transform:scaleX(1.1576);">Book</span>
<span class="t" id="t60" style="left:198.50px;top:320.00px;font-size:46.79px;color:#1e6b41;transform:scaleX(0.9062);">A</span>
<span class="t" id="t61" style="left:429.79px;top:320.00px;font-size:46.79px;color:#1e6b41;transform:scaleX(0.9038);">B</span>
<span class="t" id="t62" style="left:658.17px;top:320.00px;font-size:46.79px;color:#000;transform:scaleX(0.9167);">C</span>
<span class="t" id="t63" style="left:885.40px;top:320.00px;font-size:46.79px;color:#000;transform:scaleX(1.0345);">D</span>
<span class="t" id="t64" style="left:1121.39px;top:320.00px;font-size:46.79px;color:#000;transform:scaleX(0.7037);">E</span>
<span class="t" id="t65" style="left:1350.12px;top:320.00px;font-size:46.79px;color:#000;transform:scaleX(0.7917);">F</span>
<span class="t" id="t66" style="left:1576.15px;top:320.00px;font-size:46.79px;color:#000;transform:scaleX(0.9226);">G</span>
<span class="t" id="t67" style="left:39.09px;top:388.00px;font-size:47.49px;color:#000;transform:scaleX(0.6364);">1</span>
<span class="t" id="t68" style="left:36.50px;top:458.00px;font-size:47.49px;color:#1e6b41;transform:scaleX(0.9522);">2</span>
<span class="t" id="t69" style="left:37.51px;top:528.00px;font-size:47.49px;color:#1e6b41;transform:scaleX(0.8917);">3</span>
<span class="t" id="t70" style="left:35.82px;top:598.00px;font-size:47.49px;color:#1e6b41;transform:scaleX(0.9760);">4</span>
<span class="t" id="t71" style="left:37.92px;top:668.00px;font-size:47.49px;color:#1e6b41;transform:scaleX(0.8750);">5</span>
<span class="t" id="t72" style="left:36.02px;top:738.00px;font-size:47.49px;color:#1e6b41;transform:scaleX(0.9913);">6</span>
<span class="t" id="t73" style="left:36.29px;top:808.00px;font-size:47.49px;color:#1e6b41;transform:scaleX(0.9565);">7</span>
<span class="t" id="t74" style="left:36.02px;top:878.00px;font-size:47.49px;color:#000;transform:scaleX(0.9913);">8</span>
<span class="t" id="t75" style="left:138.99px;top:396.00px;font-size:32.12px;color:#000;font-weight:bold;transform:scaleX(1.0075);">Column 1</span>
<span class="t" id="t76" style="left:368.99px;top:396.00px;font-size:32.12px;color:#000;font-weight:bold;transform:scaleX(1.0102);">Column 2</span>
<span class="t" id="t77" style="left:176.81px;top:468.00px;font-size:28.35px;color:#000;transform:scaleX(1.0941);">Book</span>
<span class="t" id="t78" style="left:416.07px;top:468.00px;font-size:28.35px;color:#000;transform:scaleX(1.0628);">Bed</span>
<span class="t" id="t79" style="left:169.51px;top:538.00px;font-size:28.35px;color:#7a4f00;transform:scaleX(1.0974);">Pencil</span>
<span class="t" id="t80" style="left:399.71px;top:538.00px;font-size:28.35px;color:#7a4f00;transform:scaleX(1.0974);">Pencil</span>
<span class="t" id="t81" style="left:182.88px;top:608.00px;font-size:28.35px;color:#000;transform:scaleX(1.1587);">Biro</span>
<span class="t" id="t82" style="left:416.18px;top:608.00px;font-size:28.35px;color:#000;transform:scaleX(1.0585);">Bag</span>
<span class="t" id="t83" style="left:175.40px;top:678.00px;font-size:28.35px;color:#000;transform:scaleX(1.1180);">Table</span>
<span class="t" id="t84" style="left:409.78px;top:678.00px;font-size:28.35px;color:#000;transform:scaleX(1.0078);">Desk</span>
<span class="t" id="t85" style="left:174.36px;top:748.00px;font-size:28.35px;color:#7a4f00;transform:scaleX(1.0361);">Chalk</span>
<span class="t" id="t86" style="left:404.58px;top:748.00px;font-size:28.35px;color:#7a4f00;transform:scaleX(1.0250);">Chalk</span>
<span class="t" id="t87" style="left:155.60px;top:818.00px;font-size:28.35px;color:#000;transform:scaleX(1.0997);">Envelop</span>
<span class="t" id="t88" style="left:416.78px;top:818.00px;font-size:28.35px;color:#000;transform:scaleX(1.1094);">File</span>
<span class="t" id="t89" style="left:132.30px;top:958.00px;font-size:18.44px;color:#217346;font-weight:bold;transform:scaleX(1.0497);">Sheet1</span>
<span class="t" id="t90" style="left:223.60px;top:958.00px;font-size:18.44px;color:#444;transform:scaleX(1.0037);">Sheet2</span>
<span class="t" id="t91" style="left:12.52px;top:995.00px;font-size:15.08px;color:#555;transform:scaleX(0.9850);">Ready</span>
<span class="t" id="t92" style="left:157.80px;top:995.00px;font-size:15.08px;color:#555;transform:scaleX(1.0109);">Accessibility: Investigate</span>
<span class="t" id="t93" style="left:1085.00px;top:995.00px;font-size:15.08px;color:#555;transform:scaleX(1.0262);">Count: 12</span>
<span class="t" id="t94" style="left:1572.60px;top:996.00px;font-size:14.94px;color:#555;transform:scaleX(1.0337);">240%</span>
<span class="t" id="t95" style="left:906.98px;top:438.00px;font-size:17.04px;color:#111;transform:scaleX(1.0190);">Duplicate Values</span>
<span class="t" id="t96" style="left:1298.90px;top:435.00px;font-size:20.39px;color:#111;transform:scaleX(0.6909);">?</span>
<span class="t" id="t97" style="left:905.25px;top:482.00px;font-size:15.22px;color:#000;font-weight:bold;transform:scaleX(1.0523);">Format cells that contain:</span>
<span class="t" id="t98" style="left:909.55px;top:530.00px;font-size:14.94px;color:#111;transform:scaleX(1.0481);">Duplicate</span>
<span class="t" id="t99" style="left:1033.00px;top:531.00px;font-size:14.94px;color:#111;transform:scaleX(1.0518);">values with</span>
<span class="t" id="t100" style="left:1131.50px;top:530.00px;font-size:14.94px;color:#111;transform:scaleX(1.0523);">Yellow Fill with Dark Yellow Text</span>
<span class="t" id="t101" style="left:1129.77px;top:558.00px;font-size:14.94px;color:#111;transform:scaleX(1.0276);">Light Red Fill with Dark Red Text</span>
<span class="t" id="t102" style="left:1130.00px;top:579.00px;font-size:14.94px;color:#111;transform:scaleX(1.0523);">Yellow Fill with Dark Yellow Text</span>
<span class="t" id="t103" style="left:1130.00px;top:600.00px;font-size:14.94px;color:#111;transform:scaleX(1.0253);">Green Fill with Dark Green Text</span>
<span class="t" id="t104" style="left:1129.77px;top:621.00px;font-size:14.94px;color:#111;transform:scaleX(1.0273);">Light Red Fill</span>
<span class="t" id="t105" style="left:1129.82px;top:642.00px;font-size:14.94px;color:#111;transform:scaleX(0.9779);">Red Text</span>
<span class="t" id="t106" style="left:1129.79px;top:663.00px;font-size:14.94px;color:#111;transform:scaleX(1.0104);">Red Border</span>
<span class="t" id="t107" style="left:1130.00px;top:684.00px;font-size:14.94px;color:#111;transform:scaleX(1.0156);">Custom Format...</span>
<span class="t" id="t108" style="left:1463.64px;top:521.00px;font-size:26.4px;color:#000;font-weight:bold;transform:scaleX(1.0628);">Click here</span>
</body></html>
